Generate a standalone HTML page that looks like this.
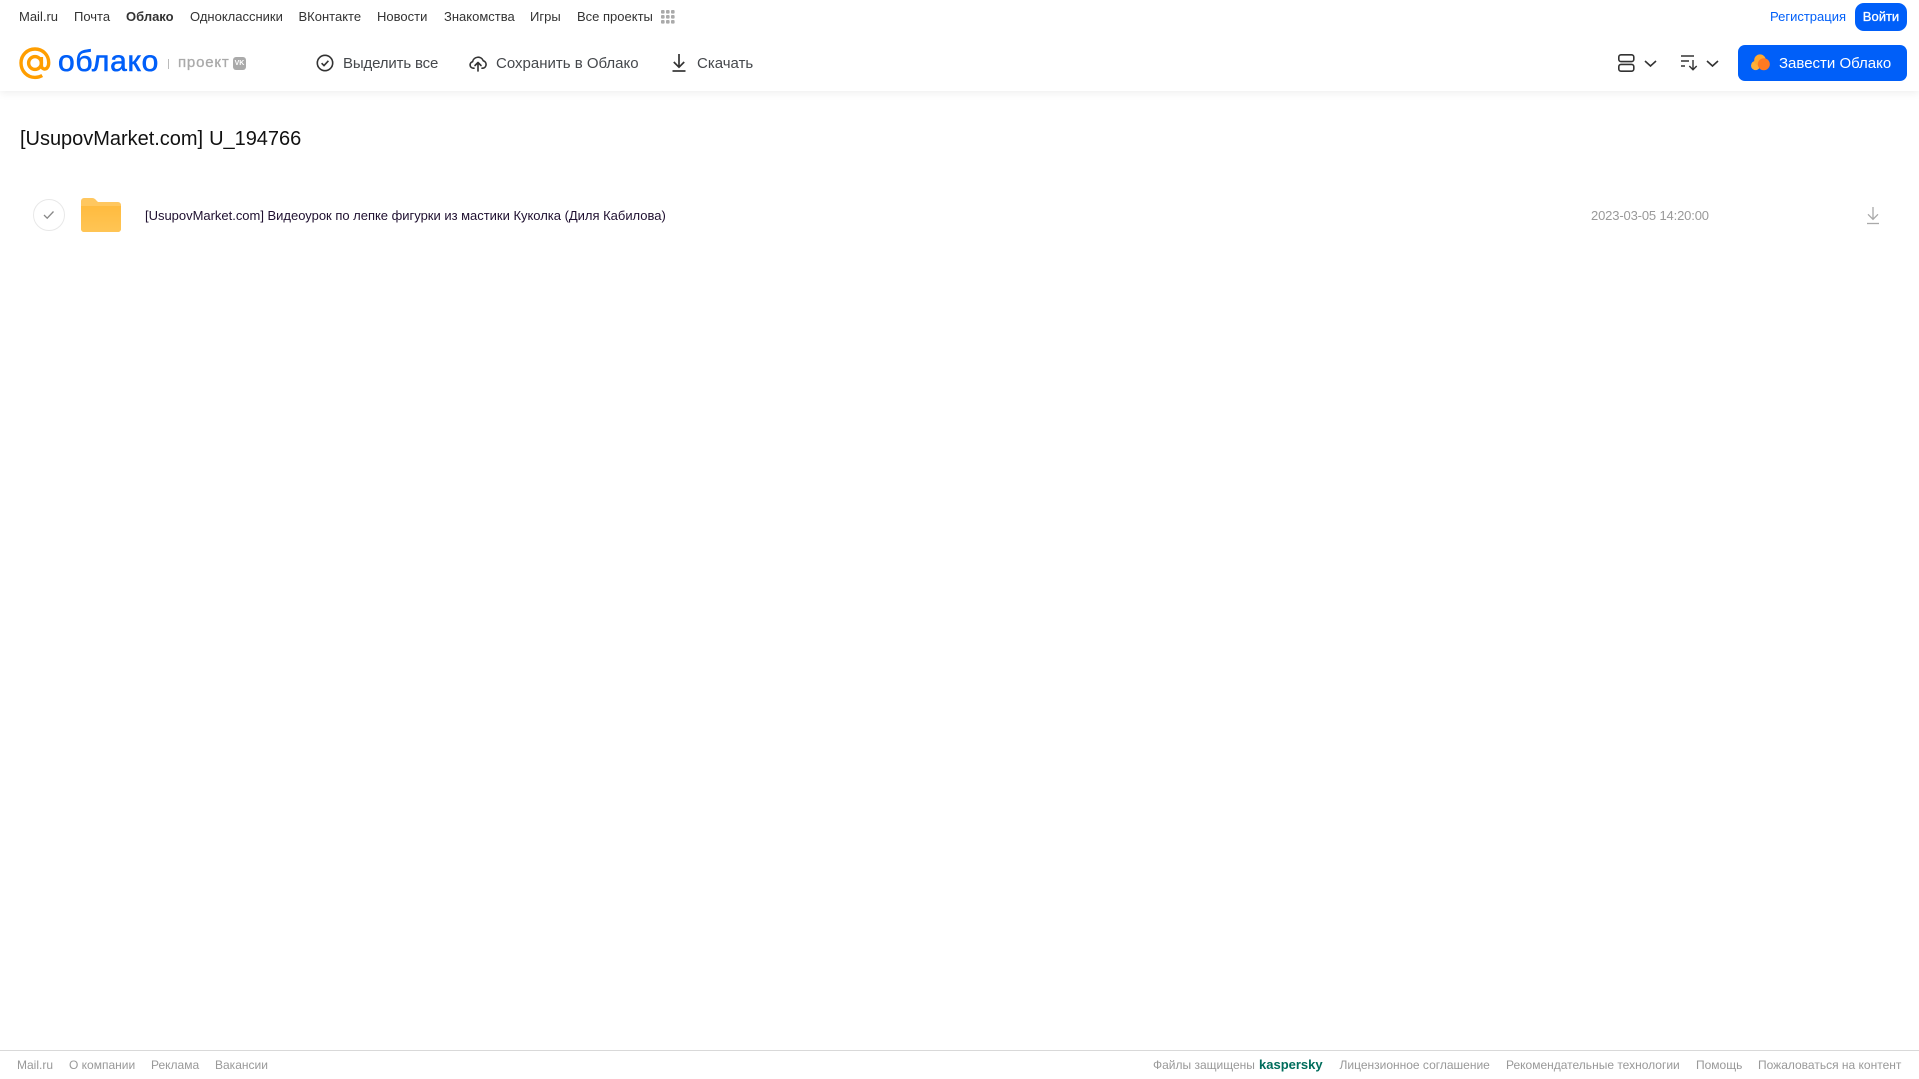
<!DOCTYPE html>
<html lang="ru"><head><meta charset="utf-8"><title>Облако</title>
<style>
html,body{margin:0;padding:0;background:#fff;overflow:hidden}
body{position:relative;width:1919px;height:1079px;font-family:"Liberation Sans",Arial,sans-serif;color:#333}
.t{position:absolute;white-space:nowrap;line-height:20px}
.n{top:7px;font-size:13px;color:#333}
.b{top:54px;font-size:15px;color:#45484c;line-height:20px}
.f{top:1055px;font-size:12px;color:#999}
svg{position:absolute;display:block;overflow:visible}
</style></head><body>
<div style="position:absolute;left:0;top:0;width:1919px;height:91px;box-shadow:0 2px 8px rgba(0,0,0,.07)"></div>

<span class="t n" style="left:19px">Mail.ru</span>
<span class="t n" style="left:74px">Почта</span>
<span class="t n" style="left:126px;font-weight:700">Облако</span>
<span class="t n" style="left:190px">Одноклассники</span>
<span class="t n" style="left:298.500px">ВКонтакте</span>
<span class="t n" style="left:377px">Новости</span>
<span class="t n" style="left:444px">Знакомства</span>
<span class="t n" style="left:530px">Игры</span>
<span class="t n" style="left:577px">Все проекты</span>
<svg style="left:661px;top:10px" width="14" height="14" fill="#aaa"><rect x="0" y="0" width="3.6" height="3.6" rx="1"/><rect x="5" y="0" width="3.6" height="3.6" rx="1"/><rect x="10" y="0" width="3.6" height="3.6" rx="1"/><rect x="0" y="5" width="3.6" height="3.6" rx="1"/><rect x="5" y="5" width="3.6" height="3.6" rx="1"/><rect x="10" y="5" width="3.6" height="3.6" rx="1"/><rect x="0" y="10" width="3.6" height="3.6" rx="1"/><rect x="5" y="10" width="3.6" height="3.6" rx="1"/><rect x="10" y="10" width="3.6" height="3.6" rx="1"/></svg>

<span class="t n" style="left:1770px;color:#005ff9">Регистрация</span>
<div style="position:absolute;left:1855px;top:3px;width:52px;height:28px;border-radius:9px;background:#005ff9;color:#fff;font-size:13px;-webkit-text-stroke:.3px #fff;line-height:28px;text-align:center">Войти</div>

<svg style="left:19px;top:47px" width="32" height="33" viewBox="0 0 32 33" fill="none" stroke="#ff9e00" stroke-width="3.4"><circle cx="16" cy="16" r="6.4"/><path d="M22.4 10v8.2c0 2.4 1.5 3.8 3.3 3.8 2.2 0 4-2.3 4-6.4C29.700 8 23.700 2 16 2S2 8 2 16s6 14.400 14 14.400c2.700 0 5-.6 7.200-1.900"/></svg>
<span class="t" style="left:58px;top:42px;font-size:30px;line-height:40px;color:#005ff9;-webkit-text-stroke:.6px #005ff9;letter-spacing:.7px">облако</span>
<div style="position:absolute;left:168px;top:59px;width:1px;height:10px;background:#bbb"></div>
<span class="t" style="left:178px;top:53px;font-size:15px;color:#aaa;-webkit-text-stroke:.3px #aaa;letter-spacing:.8px">проект</span>
<div style="position:absolute;left:233px;top:57px;width:13px;height:13px;border-radius:3px;background:#aaa;color:#fff;font-size:7px;font-weight:700;line-height:13px;text-align:center">VK</div>

<svg style="left:316px;top:54px" width="18" height="18" viewBox="0 0 18 18" fill="none" stroke="#333" stroke-width="1.600"><circle cx="9" cy="9" r="7.700"/><path d="M5.600 9.200l2.400 2.400 4.400-4.800"/></svg>
<span class="t b" style="left:343px;letter-spacing:-.15px">Выделить все</span>
<svg style="left:469px;top:54px" width="18" height="18" viewBox="0 0 18 18" fill="none" stroke="#333" stroke-width="1.600" stroke-linecap="round" stroke-linejoin="round"><path d="M5 14.200H4.300A3.300 3.300 0 0 1 3.600 7.700 5.600 5.600 0 0 1 14.300 6.800 3.800 3.800 0 0 1 14 14.200H13"/><path d="M9 17V9M6 11.500L9 8.500l3 3"/></svg>
<span class="t b" style="left:496px">Сохранить в Облако</span>
<svg style="left:671px;top:54px" width="16" height="18" viewBox="0 0 16 18" fill="none" stroke="#333" stroke-width="1.700"><path d="M8 0v13M2.800 8l5.200 5.200L13.200 8"/><path d="M1.500 17h13"/></svg>
<span class="t b" style="left:697px">Скачать</span>

<svg style="left:1618px;top:54px" width="17" height="18" viewBox="0 0 17 18" fill="none" stroke="#333" stroke-width="1.600"><rect x=".8" y=".8" width="15" height="6.800" rx="2.200"/><rect x=".8" y="10.400" width="15" height="6.800" rx="2.200"/></svg>
<svg style="left:1644px;top:60px" width="13" height="8" viewBox="0 0 13 8" fill="none" stroke="#333" stroke-width="1.600"><path d="M1 1l5.500 5L12 1"/></svg>
<svg style="left:1681px;top:55px" width="17" height="16" viewBox="0 0 17 16" fill="none" stroke="#333" stroke-width="1.400"><path d="M0 1h13M0 6h8M0 11h4M12 5v10M8.300 11l3.700 3.800 3.700-3.800"/></svg>
<svg style="left:1706px;top:60px" width="13" height="8" viewBox="0 0 13 8" fill="none" stroke="#333" stroke-width="1.600"><path d="M1 1l5.500 5L12 1"/></svg>

<div style="position:absolute;left:1738px;top:45px;width:169px;height:36px;border-radius:7px;background:#005ff9"></div>
<svg style="left:1751px;top:54px" width="19" height="17" viewBox="0 0 19 17"><circle cx="4.600" cy="11.500" r="4.600" fill="#ffb03a"/><circle cx="9" cy="6.200" r="5.800" fill="#ffa930"/><circle cx="12.800" cy="10.200" r="6" fill="#ff7a22"/></svg>
<span class="t" style="left:1779px;top:54px;font-size:15px;color:#fff">Завести Облако</span>

<span class="t" style="left:20px;top:126px;font-size:20px;line-height:26px;color:#111;word-spacing:.5px;letter-spacing:-.02px">[UsupovMarket.com] U_194766</span>

<div style="position:absolute;left:33px;top:199px;width:30px;height:30px;border:1px solid #e8e8e8;border-radius:50%"></div>
<svg style="left:43px;top:210px" width="12" height="10" viewBox="0 0 12 10" fill="none" stroke="#888" stroke-width="1.300"><path d="M1 5l3.200 3.200L10.500 1.500"/></svg>
<svg style="left:81px;top:198px" width="40" height="34" viewBox="0 0 40 34"><defs><linearGradient id="g" x1="0" y1="0" x2="0" y2="1"><stop offset="0" stop-color="#ffbb3f"/><stop offset="1" stop-color="#ffc555"/></linearGradient></defs><path d="M3 0h8c2 0 3 .8 4.200 2.200L17 4H37a3 3 0 0 1 3 3v24a3 3 0 0 1-3 3H3a3 3 0 0 1-3-3V3a3 3 0 0 1 3-3z" fill="#ffc75f"/><path d="M0 8h40v23a3 3 0 0 1-3 3H3a3 3 0 0 1-3-3z" fill="url(#g)"/></svg>
<span class="t" style="left:145px;top:206px;font-size:13px;color:#1f1030;letter-spacing:-.015px">[UsupovMarket.com] Видеоурок по лепке фигурки из мастики Куколка (Диля Кабилова)</span>
<span class="t" style="left:1591px;top:206px;font-size:13px;color:#999;letter-spacing:-.15px">2023-03-05 14:20:00</span>
<svg style="left:1866px;top:207px" width="14" height="18" viewBox="0 0 14 18" fill="none" stroke="#a9a9a9" stroke-width="1.300"><path d="M7 0v12M2 7.300l5 5 5-5"/><path d="M1 16.500h12"/></svg>

<div style="position:absolute;left:0;top:1050px;width:1919px;height:1px;background:#d9d9d9"></div>
<span class="t f" style="left:17px">Mail.ru</span>
<span class="t f" style="left:69px">О компании</span>
<span class="t f" style="left:151px">Реклама</span>
<span class="t f" style="left:215px">Вакансии</span>
<span class="t f" style="left:1153px">Файлы защищены</span>
<span class="t f" style="left:1259px;font-size:13px;font-weight:700;color:#006d5c">kaspersky</span>
<span class="t f" style="left:1339.500px">Лицензионное соглашение</span>
<span class="t f" style="left:1506px">Рекомендательные технологии</span>
<span class="t f" style="left:1696px">Помощь</span>
<span class="t f" style="left:1758px">Пожаловаться на контент</span>
</body></html>
